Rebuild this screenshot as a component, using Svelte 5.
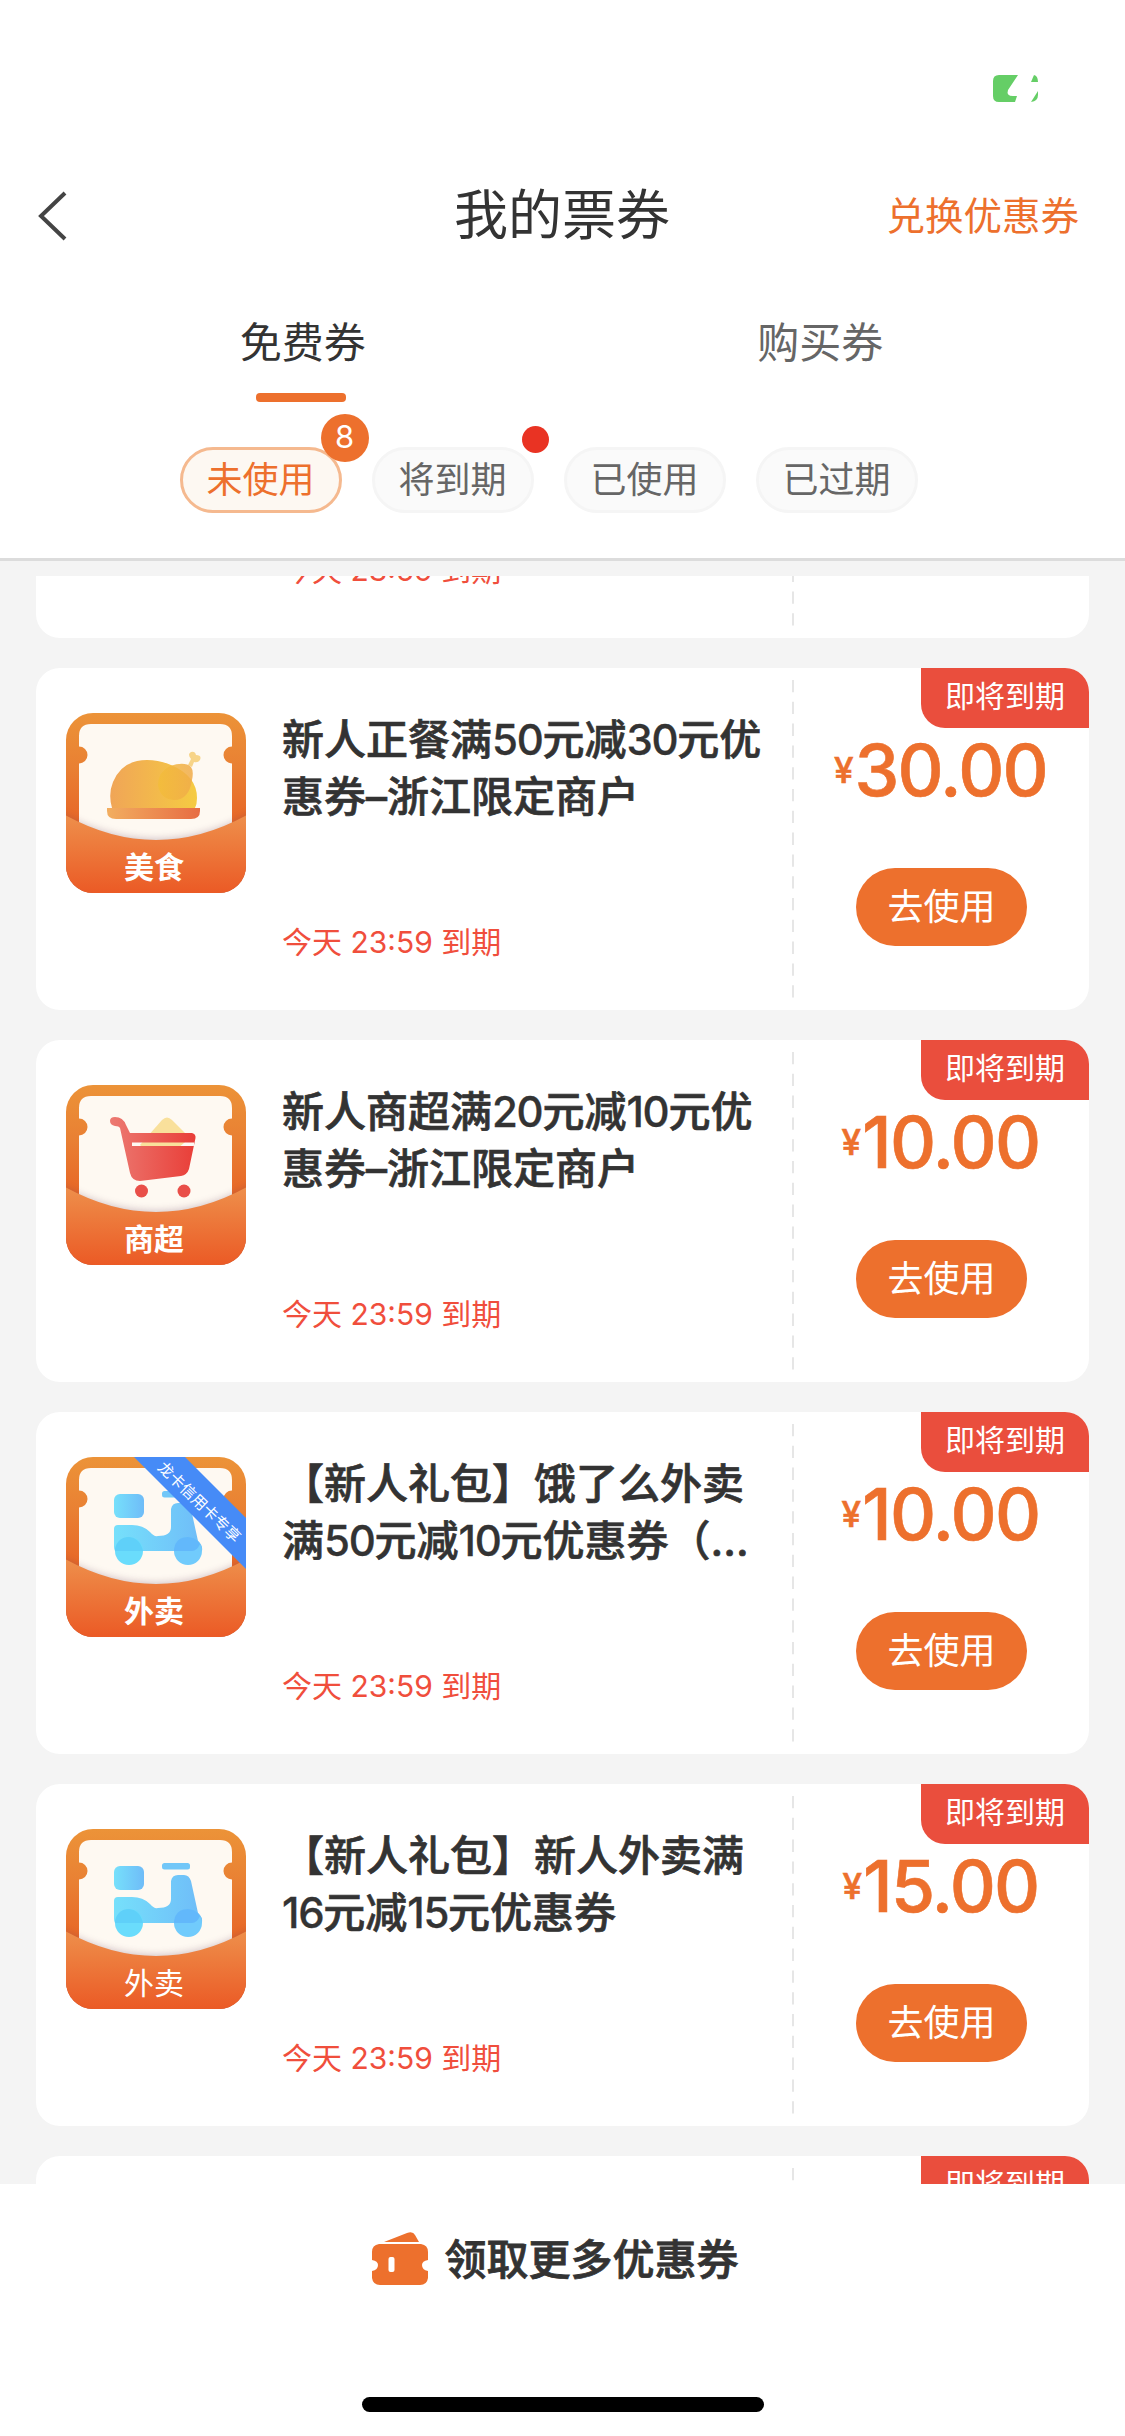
<script lang="ts">
	type Kind = 'food' | 'market' | 'takeout';

	interface Coupon {
		id: number;
		kind: Kind;
		label: string;
		bold?: boolean;
		ribbon?: string;
		title: string[];
		price: string;
	}

	const tabs = ['免费券', '购买券'];
	const filters = [
		{ label: '未使用', count: 8 },
		{ label: '将到期', dot: true },
		{ label: '已使用' },
		{ label: '已过期' }
	];

	const coupons: Coupon[] = [
		{ id: 0, kind: 'food', label: '美食', title: [], price: '30.00' },
		{ id: 1, kind: 'food', label: '美食', bold: true, title: ['新人正餐满50元减30元优', '惠券–浙江限定商户'], price: '30.00' },
		{ id: 2, kind: 'market', label: '商超', bold: true, title: ['新人商超满20元减10元优', '惠券–浙江限定商户'], price: '10.00' },
		{ id: 3, kind: 'takeout', label: '外卖', bold: true, ribbon: '龙卡信用卡专享', title: ['【新人礼包】饿了么外卖', '满50元减10元优惠券（...'], price: '10.00' },
		{ id: 4, kind: 'takeout', label: '外卖', title: ['【新人礼包】新人外卖满', '16元减15元优惠券'], price: '15.00' },
		{ id: 5, kind: 'takeout', label: '外卖', title: [], price: '15.00' }
	];

	let activeTab = $state(0);
	let activeFilter = $state(0);

	// digits are set a little tighter than the characters around them
	function pieces(line: string) {
		return line.split(/(\d+)/).filter(Boolean);
	}
</script>

<div class="page">
	<div class="status">
		<svg width="45" height="27" viewBox="0 0 45 27">
			<path d="M6 0H25L15 15Q13 21 20 21H24L22 27H6Q0 27 0 21V6Q0 0 6 0Z" fill="#65ce66" />
			<path d="M41 0Q45 1 45 7H38Z" fill="#65ce66" />
			<path d="M45 16V20Q45 26 38 27Z" fill="#65ce66" />
		</svg>
	</div>

	<header>
		<button class="back" aria-label="返回">
			<svg width="32" height="52" viewBox="0 0 32 52">
				<path d="M28 3L4 26L28 49" fill="none" stroke="#444" stroke-width="4" />
			</svg>
		</button>
		<h1>我的票券</h1>
		<button class="exchange">兑换优惠券</button>
	</header>

	<nav>
		{#each tabs as tab, i (tab)}
			<button class="tab" class:active={activeTab === i} onclick={() => (activeTab = i)}>{tab}</button>
		{/each}
	</nav>

	<div class="filters">
		{#each filters as f, i (f.label)}
			<button class="pill" class:active={activeFilter === i} onclick={() => (activeFilter = i)}>
				{f.label}
				{#if f.count}<span class="count">{f.count}</span>{/if}
				{#if f.dot}<span class="dot"></span>{/if}
			</button>
		{/each}
	</div>

	<main>
		<div class="list">
			{#each coupons as c (c.id)}
				<article>
					<svg class="thumb" width="180" height="180" viewBox="0 0 180 180">
						<defs>
							<linearGradient id="bg{c.id}" x1="0" y1="0" x2="0" y2="1">
								<stop offset="0" stop-color="#ec9338" />
								<stop offset="0.3" stop-color="#e98033" />
								<stop offset="0.65" stop-color="#e76325" />
							</linearGradient>
							<linearGradient id="pocket{c.id}" x1="0" y1="0" x2="0" y2="1">
								<stop offset="0" stop-color="#ee8f4b" />
								<stop offset="1" stop-color="#eb5a25" />
							</linearGradient>
							<linearGradient id="gold{c.id}">
								<stop offset="0" stop-color="#f0a557" />
								<stop offset="1" stop-color="#f5cb42" />
							</linearGradient>
							<linearGradient id="leg{c.id}">
								<stop offset="0" stop-color="#f3bd3a" />
								<stop offset="1" stop-color="#f0ab4a" />
							</linearGradient>
							<linearGradient id="plate{c.id}">
								<stop offset="0" stop-color="#f2ae60" />
								<stop offset="1" stop-color="#e76c43" />
							</linearGradient>
							<linearGradient id="red{c.id}">
								<stop offset="0" stop-color="#ec7a72" />
								<stop offset="1" stop-color="#e93e38" />
							</linearGradient>
							<linearGradient id="blue{c.id}">
								<stop offset="0" stop-color="#76e0fb" />
								<stop offset="1" stop-color="#6fbcf8" />
							</linearGradient>
							<clipPath id="round{c.id}"><rect width="180" height="180" rx="27" /></clipPath>
							<filter id="soft{c.id}" x="-20%" y="-20%" width="140%" height="140%">
								<feGaussianBlur stdDeviation="4" />
							</filter>
						</defs>
						<g clip-path="url(#round{c.id})">
							<rect width="180" height="180" fill="url(#bg{c.id})" />
							<path d="M25 11H154Q166 11 166 23V33.500A8.500 8.500 0 0 0 166 50.500V140H13V50.500A8.500 8.500 0 0 0 13 33.500V23Q13 11 25 11Z" fill="#fef9f2" />

							{#if c.kind === 'food'}
								<path d="M46 95Q42 81 47 69Q56 47 81 47Q93 47 105 52Q131 63 131 85Q131 91 129 95Z" fill="url(#gold{c.id})" />
								<path d="M122 52L125 46Q121 41 125 39Q129 38 130 42Q136 42 134 47Q132 50 128 49L126 54Z" fill="#f7d488" />
								<path d="M104 53Q119 48 125 54Q128 58 126 67Q123 87 108 87Q94 86 92 72Q92 59 104 53Z" fill="url(#leg{c.id})" opacity="0.85" />
								<path d="M41 95H134V98Q134 106 125 106H50Q41 106 41 98Z" fill="url(#plate{c.id})" />
							{:else if c.kind === 'market'}
								<path d="M74 60L96 35Q101 30 106 35L124 53L94 78Z" fill="#f9e09b" />
								<path fill-rule="evenodd" d="M49 32Q57 32 60 40L64 48H126Q130 49 129.500 53L123 84Q121 90 115 91L74 96Q66 96 64 88L54 43Q53 41 49 41Q44 40 44 36Q44 32 49 32ZM66 57.500V61H128V57.500Z" fill="url(#red{c.id})" />
								<circle cx="75.500" cy="106" r="6.500" fill="#e94f49" />
								<circle cx="118" cy="106" r="6.500" fill="#e94f49" />
							{:else}
								<rect x="48" y="37" width="30" height="24" rx="6" fill="url(#blue{c.id})" />
								<rect x="96" y="34" width="28" height="6.500" rx="2.500" fill="#72c7f8" />
								<path d="M52 68H66Q77 68 84 75Q88 80 92 79Q105 79 105 70V52Q106 46 112 46H118Q123 46 125 52L132 84Q137 88 136 94H49Q48 92 48 90V72Q48 68 52 68Z" fill="url(#blue{c.id})" />
								<circle cx="63" cy="94" r="14" fill="#6adcfc" />
								<circle cx="122" cy="94" r="14" fill="#71cbfc" />
								<path d="M49 92Q52 80 63 80Q74 81 77 94H49Z" fill="#5fd0f9" />
								<path d="M108 92Q110 80 122 80Q130 80 134 87Q131 94 126 94H108Z" fill="#62b8fb" />
							{/if}

							<path d="M-8 100Q90 154 188 100V190H-8Z" fill="#6a4560" opacity="0.38" filter="url(#soft{c.id})" />
							<path d="M0 102.500Q90 151.500 180 102.500V180H0Z" fill="url(#pocket{c.id})" />
							<text class="label" class:bold={c.bold} x="88" y="164.500" text-anchor="middle">{c.label}</text>

							{#if c.ribbon}
								<path d="M68 0H119L180 61V112Z" fill="#468bf7" />
								<text class="ribbon" transform="translate(129.500 49) rotate(44)" text-anchor="middle">{c.ribbon}</text>
							{/if}
						</g>
					</svg>

					<div class="info">
						<h2>
							{#each c.title as line}
								<span class="line">{#each pieces(line) as part}<span class:num={/^\d/.test(part)}>{part}</span>{/each}</span>
							{/each}
						</h2>
						<p>今天 23:59 到期</p>
					</div>

					<svg class="divider" width="2" height="318">
						<line x1="1" y1="0" x2="1" y2="318" stroke="#e6e6e6" stroke-width="2" stroke-dasharray="12.300 9.500" />
					</svg>

					<div class="side">
						<span class="tag">即将到期</span>
						<div class="price"><span class="yen">¥</span>{c.price}</div>
						<button class="use">去使用</button>
					</div>
				</article>
			{/each}
		</div>
	</main>

	<footer>
		<button class="more">
			<svg width="58" height="54" viewBox="0 0 58 54">
				<path d="M13 10L36 1Q42-1 44 3L48 10Z" fill="#ed702d" />
				<path d="M8 12H50Q57 13 57 20V28Q51 29 51 33Q51 38 57 39V46Q56 53 49 53H9Q2 53 1 46V39Q7 38 7 33Q7 29 1 28V20Q1 13 8 12Z" fill="#ed702d" />
				<rect x="17.500" y="25" width="6" height="15" rx="2" fill="#fff" />
			</svg>
			<span>领取更多优惠券</span>
		</button>
		<div class="home"></div>
	</footer>
</div>

<style>
	:global(body) {
		margin: 0;
		overflow: hidden;
	}

	.page {
		width: 1125px;
		height: 2436px;
		display: flex;
		flex-direction: column;
		background: #fff;
		overflow: hidden;
		color: #333;
		font-family: Inter, 'Noto Sans CJK SC', sans-serif;
	}

	button {
		padding: 0;
		border: none;
		background: none;
		font: inherit;
		color: inherit;
		white-space: nowrap;
	}

	svg {
		display: block;
		flex: none;
	}

	.status {
		box-sizing: border-box;
		height: 132px;
		padding: 75px 87px 0 0;
		display: flex;
		justify-content: flex-end;
	}

	header {
		box-sizing: border-box;
		height: 168px;
		padding: 0 46px 0 37px;
		display: grid;
		grid-template-columns: 1fr auto 1fr;
		align-items: center;
	}

	.back {
		justify-self: start;
	}

	h1 {
		margin: 0 0 0 8px;
		font-size: 54px;
		font-weight: 400;
		line-height: 80px;
	}

	.exchange {
		justify-self: end;
		padding-bottom: 7px;
		font-size: 38.5px;
		color: #ed702d;
	}

	nav {
		display: flex;
		height: 102px;
		padding: 0 46px 0 44px;
	}

	.tab {
		flex: 1;
		display: flex;
		flex-direction: column;
		align-items: center;
		padding-top: 9px;
		font-size: 42px;
		line-height: 67px;
		color: #666;
	}

	.tab.active {
		color: #333;
	}

	.tab.active::after {
		content: '';
		width: 90px;
		height: 9px;
		margin-top: 17px;
		margin-right: 3px;
		border-radius: 4px;
		background: #ed702d;
	}

	.filters {
		box-sizing: border-box;
		height: 159px;
		padding: 45px 30px 0 0;
		display: flex;
		justify-content: center;
		border-bottom: 3px solid #dcdcdc;
	}

	.pill {
		box-sizing: border-box;
		position: relative;
		width: 162px;
		height: 66px;
		margin: 0 14px 0 16px;
		border: 3px solid #f5f5f5;
		border-radius: 33px;
		background: #fafafa;
		font-size: 36px;
		line-height: 58px;
		color: #666;
	}

	.pill.active {
		border-color: #f5b98f;
		background: #fdf8f2;
		color: #ed702d;
	}

	.count {
		position: absolute;
		top: -36px;
		right: -30px;
		width: 48px;
		height: 48px;
		border-radius: 50%;
		background: #ed702d;
		color: #fff;
		font-size: 31px;
		line-height: 45px;
	}

	.dot {
		position: absolute;
		top: -24px;
		right: -18px;
		width: 27px;
		height: 27px;
		border-radius: 50%;
		background: #e93323;
	}

	main {
		flex: none;
		box-sizing: border-box;
		height: 1623px;
		padding: 15px 36px 0;
		background: #f4f4f4;
	}

	.list {
		height: 1608px;
		overflow: hidden;
		display: flex;
		flex-direction: column;
		gap: 30px;
	}

	article {
		flex: none;
		box-sizing: border-box;
		height: 342px;
		display: flex;
		border-radius: 24px;
		background: #fff;
		overflow: hidden;
	}

	/* list is scrolled part way through the first coupon */
	article:first-child {
		margin-top: -280px;
	}

	.thumb {
		margin: 45px 0 0 30px;
	}

	.label {
		font-size: 30px;
		fill: #fff;
	}

	.label.bold {
		font-weight: 700;
	}

	.ribbon {
		font-size: 15.4px;
		fill: #fff;
	}

	.info {
		width: 510px;
		margin-left: 36px;
		padding-top: 43px;
	}

	h2 {
		margin: 0;
		height: 203px;
		font-size: 42px;
		font-weight: 500;
		line-height: 57px;
		-webkit-text-stroke: 0.7px #333;
	}

	.line {
		display: block;
		white-space: nowrap;
	}

	.num {
		letter-spacing: -1.3px;
		-webkit-text-stroke-width: 0.3px;
	}

	p {
		margin: 0;
		font-size: 30px;
		line-height: 56px;
		color: #f04e3c;
	}

	.divider {
		margin-top: 12px;
	}

	.side {
		flex: 1;
		display: flex;
		flex-direction: column;
		align-items: center;
	}

	.tag {
		align-self: flex-end;
		width: 168px;
		height: 60px;
		border-bottom-left-radius: 24px;
		background: #ea4e3d;
		color: #fff;
		font-size: 30px;
		line-height: 57px;
		text-align: center;
	}

	.price {
		display: flex;
		align-items: center;
		height: 84px;
		margin-right: 2px;
		color: #ed702d;
		font-size: 71.5px;
		font-weight: 500;
		line-height: 84px;
		letter-spacing: -1.7px;
		-webkit-text-stroke: 0.6px #ed702d;
	}

	.yen {
		margin-right: 1px;
		font-size: 35px;
		letter-spacing: 0;
	}

	.use {
		width: 171px;
		height: 78px;
		margin-top: 56px;
		border-radius: 39px;
		background: #ed702d;
		color: #fff;
		font-size: 36px;
		line-height: 75px;
	}

	footer {
		flex: 1;
		display: flex;
		flex-direction: column;
		align-items: center;
		background: #fff;
	}

	.more {
		display: flex;
		align-items: center;
		gap: 15px;
		height: 150px;
		margin-right: 15px;
		font-size: 42px;
		font-weight: 500;
		-webkit-text-stroke: 0.8px #333;
	}

	.more span {
		padding-bottom: 6px;
	}

	.home {
		width: 402px;
		height: 15px;
		margin-top: 63px;
		border-radius: 8px;
		background: #000;
	}
</style>
